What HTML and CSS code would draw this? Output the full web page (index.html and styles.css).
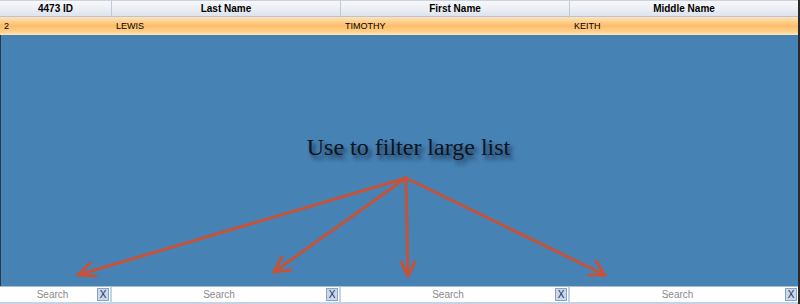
FILE: index.html
```html
<!DOCTYPE html>
<html lang="en">
<head>
    <meta charset="UTF-8">
    <title>Filter list</title>
    <link rel="stylesheet" href="styles.css">
</head>
<body>
    <div class="grid">
        <div class="grid__head">
            <div class="cell">4473 ID</div>
            <div class="cell">Last Name</div>
            <div class="cell">First Name</div>
            <div class="cell">Middle Name</div>
        </div>
        <div class="grid__row">
            <div class="cell">2</div>
            <div class="cell">LEWIS</div>
            <div class="cell">TIMOTHY</div>
            <div class="cell">KEITH</div>
        </div>
        <div class="grid__body">
            <p class="hint">Use to filter large list</p>
            <svg class="arrows" width="798" height="251" viewBox="0 35 798 251">
                <g stroke="#c4533a" stroke-width="3" fill="none" stroke-linecap="round" stroke-linejoin="round">
                    <path d="M406 178 L78 275"/>
                    <path d="M78 275 L96 276 M78 275 L90 263"/>
                    <path d="M406 178 L274 272"/>
                    <path d="M274 272 L291 270 M274 272 L282 257"/>
                    <path d="M406 178 L408 276"/>
                    <path d="M408 276 L401 262 M408 276 L415 262"/>
                    <path d="M406 178 L605 275"/>
                    <path d="M605 275 L589 275 M605 275 L596 261"/>
                </g>
            </svg>
        </div>
        <div class="grid__filter">
            <div class="search"><span class="search__text">Search</span><span class="search__clear">X</span></div>
            <div class="search"><span class="search__text">Search</span><span class="search__clear">X</span></div>
            <div class="search"><span class="search__text">Search</span><span class="search__clear">X</span></div>
            <div class="search"><span class="search__text">Search</span><span class="search__clear">X</span></div>
        </div>
    </div>
</body>
</html>
```

FILE: styles.css
```css
* {
    margin: 0;
    padding: 0;
    box-sizing: border-box;
}

body {
    width: 800px;
    height: 304px;
    overflow: hidden;
    background-color: #fff;
    font-family: "Liberation Sans", Arial, sans-serif;
}

.grid {
    height: 304px;
    display: flex;
    flex-direction: column;
    border-right: 2px solid #2a2a2a;
}

.grid__head,
.grid__row,
.grid__filter {
    display: grid;
    grid-template-columns: 112px 229px 229px 1fr;
}

.grid__head {
    height: 17px;
    background: linear-gradient(#f7f8fb, #e9edf4 60%, #dde3ec);
    border-top: 1px solid #c9d2de;
    border-bottom: 1px solid #b7c4d6;
}

.grid__head .cell {
    text-align: center;
    font-size: 10px;
    font-weight: bold;
    line-height: 15px;
    color: #000;
    border-right: 1px solid #bccadb;
}

.grid__head .cell:last-child {
    border-right: none;
}

.grid__row {
    height: 18px;
    background: linear-gradient(#ffe3b8, #fdbd68 50%, #ffcf8a 80%, #ffe4bb);
}

.grid__row .cell {
    padding-left: 4px;
    font-size: 9px;
    line-height: 18px;
    color: #000;
}

.grid__body {
    flex: 1;
    position: relative;
    background-color: #4682b4;
    border-left: 1px solid #2a3a4a;
}

.hint {
    padding-top: 99px;
    padding-left: 18px;
    text-align: center;
    font-family: "Liberation Serif", "Times New Roman", serif;
    font-size: 24px;
    color: #0c1422;
    text-shadow: 3px 4px 4px rgba(10, 20, 40, 0.75);
}

.arrows {
    position: absolute;
    top: 0;
    left: -1px;
}

.grid__filter {
    height: 18px;
    border-top: 1px solid #a9bfd8;
    border-bottom: 2px solid #c4d3e6;
    background-color: #c4d3e6;
}

.search {
    display: flex;
    align-items: center;
    background-color: #fff;
    margin-right: 2px;
    padding-right: 1px;
}

.search:first-child {
    padding-left: 8px;
}

.search:last-child {
    margin-right: 0;
}

.search__text {
    flex: 1;
    text-align: center;
    font-size: 10px;
    color: #8a8a8a;
}

.search__clear {
    width: 12px;
    height: 13px;
    display: flex;
    justify-content: center;
    align-items: center;
    font-size: 10px;
    color: #1b2a55;
    background-color: #c9d8ec;
    border: 1px solid #8aa3c6;
}
```
